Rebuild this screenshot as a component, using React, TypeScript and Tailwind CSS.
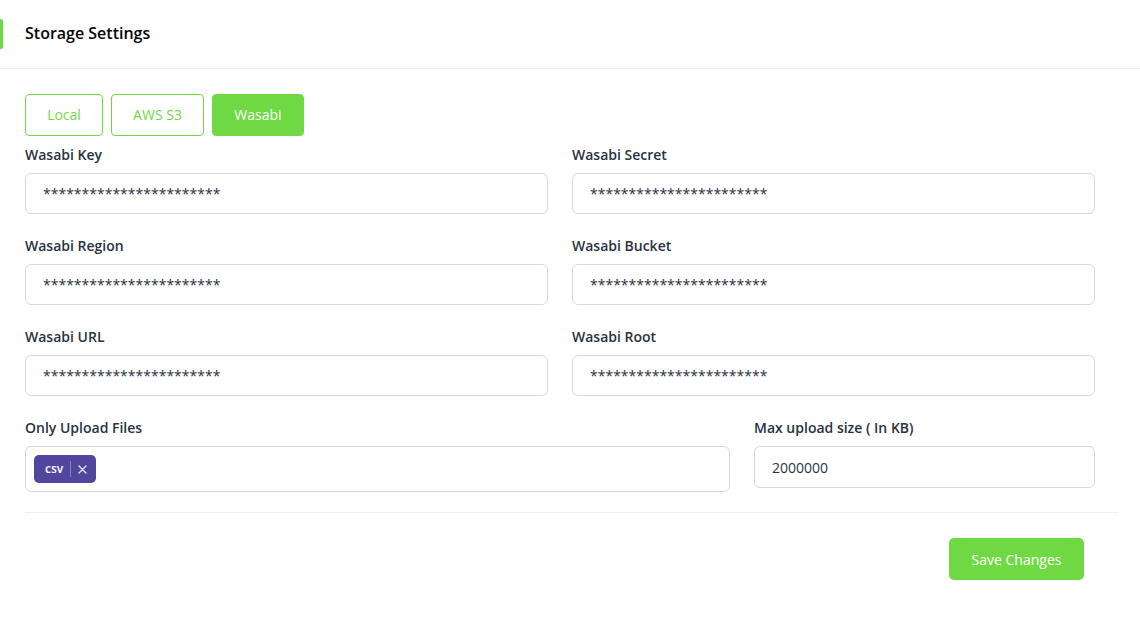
import React from "react";

const font = { fontFamily: '"Open Sans", "Noto Sans", sans-serif' };

function Field({ label, value }: { label: string; value: string }) {
  return (
    <div className="mb-[21px] flex flex-col">
      <label className="mb-[8px] text-[14px] font-semibold leading-[21px] text-[#293240]">{label}</label>
      <div className="flex h-[41px] items-center rounded-[6px] border border-[#d4d8de] bg-white pl-[17px] text-[14px] text-[#293240]">
        {value}
      </div>
    </div>
  );
}

export default function App() {
  const stars = "***********************";
  return (
    <div className="min-h-[629px] w-[1140px] bg-white" style={font}>
      <div className="relative flex h-[69px] items-center border-b border-[#f0f0f0] pb-[2px] pl-[25px]">
        <div className="absolute left-0 top-[19px] h-[30px] w-[3px] rounded-r-[2px] bg-[#6fd943]" />
        <h1 className="text-[16px] font-semibold text-[#060606]">Storage Settings</h1>
      </div>
      <div className="pl-[25px] pr-[22px] pt-[25px]">
        <div className="flex gap-[8px]">
          <button className="h-[42px] w-[78px] rounded-[4px] border border-[#6fd943] bg-white pb-[1px] text-[14px] text-[#6fd943]">Local</button>
          <button className="h-[42px] w-[93px] rounded-[4px] border border-[#6fd943] bg-white pb-[1px] text-[14px] text-[#6fd943]">AWS S3</button>
          <button className="h-[42px] w-[92px] rounded-[4px] border border-[#6fd943] bg-[#6fd943] pb-[1px] text-[14px] text-white">Wasabi</button>
        </div>
        <div className="mt-[8px] grid w-[1070px] grid-cols-2 gap-x-[24px]">
          <Field label="Wasabi Key" value={stars} />
          <Field label="Wasabi Secret" value={stars} />
          <Field label="Wasabi Region" value={stars} />
          <Field label="Wasabi Bucket" value={stars} />
          <Field label="Wasabi URL" value={stars} />
          <Field label="Wasabi Root" value={stars} />
        </div>
        <div className="flex w-[1070px] gap-[24px]">
          <div className="flex w-[705px] flex-col">
            <label className="mb-[8px] text-[14px] font-semibold leading-[21px] text-[#293240]">Only Upload Files</label>
            <div className="flex h-[46px] items-center rounded-[6px] border border-[#d4d8de] bg-white pl-[8px]">
              <span className="flex h-[28px] items-center rounded-[5px] bg-[#51459d] pl-[11px] pr-[9px] text-[12px] font-semibold text-white">
                <span>csv</span>
                <span className="mx-[7px] h-[16px] w-px bg-[#8a80c4]" />
                <svg width="9" height="9" viewBox="0 0 9 9" fill="none" stroke="#e5e2f5" strokeWidth="1.4" strokeLinecap="round">
                  <path d="M1 1L8 8M8 1L1 8" />
                </svg>
              </span>
            </div>
          </div>
          <div className="flex w-[341px] flex-col">
            <label className="mb-[8px] text-[14px] font-semibold leading-[21px] text-[#293240]">Max upload size ( In KB)</label>
            <div className="flex h-[42px] items-center rounded-[6px] border border-[#d4d8de] bg-white pl-[17px] text-[14px] text-[#293240]">
              2000000
            </div>
          </div>
        </div>
        <div className="mt-[20px] border-t border-[#eeeeee]" />
        <div className="flex justify-end pr-[34px] pt-[25px]">
          <button className="h-[42px] w-[135px] rounded-[5px] bg-[#6fd943] text-[14px] text-white">Save Changes</button>
        </div>
      </div>
    </div>
  );
}
